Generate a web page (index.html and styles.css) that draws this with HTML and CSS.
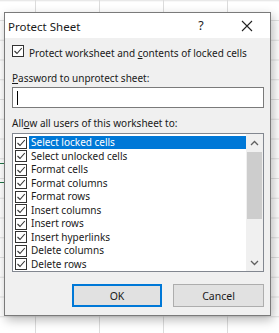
FILE: index.html
```html
<!DOCTYPE html>
<html lang="en">
<head>
  <meta charset="UTF-8">
  <title>Protect Sheet</title>
  <link rel="stylesheet" href="styles.css">
</head>
<body>

<div class="dialog">
  <div class="titlebar">
    <span class="title">Protect Sheet</span>
    <span class="tb-btn">?</span>
    <span class="tb-btn">
      <svg width="12" height="12" viewBox="0 0 12 12"><path d="M1 1 L11 11 M11 1 L1 11" stroke="#222" stroke-width="1.1" fill="none"/></svg>
    </span>
  </div>

  <div class="content">
    <div class="check-row">
      <span class="box"><svg width="10" height="10" viewBox="0 0 10 10"><path d="M1.5 5 L4 7.5 L8.8 2" stroke="#333" stroke-width="1.1" fill="none"/></svg></span>
      <span>Protect worksheet and <u>c</u>ontents of locked cells</span>
    </div>

    <div class="label"><u>P</u>assword to unprotect sheet:</div>
    <div class="input"><span class="caret"></span></div>

    <div class="label allow">All<u>o</u>w all users of this worksheet to:</div>

    <div class="listbox">
      <div class="items">
        <div class="item selected"><span class="box"><svg width="10" height="10" viewBox="0 0 10 10"><path d="M1.5 5 L4 7.5 L8.8 2" stroke="#333" stroke-width="1.1" fill="none"/></svg></span><span class="txt">Select locked cells</span></div>
        <div class="item"><span class="box"><svg width="10" height="10" viewBox="0 0 10 10"><path d="M1.5 5 L4 7.5 L8.8 2" stroke="#333" stroke-width="1.1" fill="none"/></svg></span><span class="txt">Select unlocked cells</span></div>
        <div class="item"><span class="box"><svg width="10" height="10" viewBox="0 0 10 10"><path d="M1.5 5 L4 7.5 L8.8 2" stroke="#333" stroke-width="1.1" fill="none"/></svg></span><span class="txt">Format cells</span></div>
        <div class="item"><span class="box"><svg width="10" height="10" viewBox="0 0 10 10"><path d="M1.5 5 L4 7.5 L8.8 2" stroke="#333" stroke-width="1.1" fill="none"/></svg></span><span class="txt">Format columns</span></div>
        <div class="item"><span class="box"><svg width="10" height="10" viewBox="0 0 10 10"><path d="M1.5 5 L4 7.5 L8.8 2" stroke="#333" stroke-width="1.1" fill="none"/></svg></span><span class="txt">Format rows</span></div>
        <div class="item"><span class="box"><svg width="10" height="10" viewBox="0 0 10 10"><path d="M1.5 5 L4 7.5 L8.8 2" stroke="#333" stroke-width="1.1" fill="none"/></svg></span><span class="txt">Insert columns</span></div>
        <div class="item"><span class="box"><svg width="10" height="10" viewBox="0 0 10 10"><path d="M1.5 5 L4 7.5 L8.8 2" stroke="#333" stroke-width="1.1" fill="none"/></svg></span><span class="txt">Insert rows</span></div>
        <div class="item"><span class="box"><svg width="10" height="10" viewBox="0 0 10 10"><path d="M1.5 5 L4 7.5 L8.8 2" stroke="#333" stroke-width="1.1" fill="none"/></svg></span><span class="txt">Insert hyperlinks</span></div>
        <div class="item"><span class="box"><svg width="10" height="10" viewBox="0 0 10 10"><path d="M1.5 5 L4 7.5 L8.8 2" stroke="#333" stroke-width="1.1" fill="none"/></svg></span><span class="txt">Delete columns</span></div>
        <div class="item"><span class="box"><svg width="10" height="10" viewBox="0 0 10 10"><path d="M1.5 5 L4 7.5 L8.8 2" stroke="#333" stroke-width="1.1" fill="none"/></svg></span><span class="txt">Delete rows</span></div>
      </div>
      <div class="scrollbar">
        <span class="arrow"><svg width="9" height="6" viewBox="0 0 9 6"><path d="M1 5 L4.5 1.5 L8 5" stroke="#606060" stroke-width="1.3" fill="none"/></svg></span>
        <div class="track"><div class="thumb"></div></div>
        <span class="arrow"><svg width="9" height="6" viewBox="0 0 9 6"><path d="M1 1 L4.5 4.5 L8 1" stroke="#606060" stroke-width="1.3" fill="none"/></svg></span>
      </div>
    </div>

    <div class="buttons">
      <button class="btn default">OK</button>
      <button class="btn">Cancel</button>
    </div>
  </div>
</div>

</body>
</html>
```

FILE: styles.css
```css
body {
  margin: 0;
  height: 333px;
  overflow: hidden;
  font-family: "Noto Sans", "Open Sans", sans-serif;
  color: #1a1a1a;
  background-color: #fff;
  background-image:
    linear-gradient(#217346, #217346),
    linear-gradient(#217346, #217346),
    linear-gradient(to right, #dcdcdc 1px, transparent 1px),
    linear-gradient(to bottom, #e2e2e2 1px, transparent 1px);
  background-size: 4px 1px, 4px 1px, 64px 100%, 100% 19.75px;
  background-position: 0 163px, 0 182px, 35px 0, 0 20px;
  background-repeat: no-repeat, no-repeat, repeat, repeat;
  padding: 12px 0 0 4px;
  box-sizing: border-box;
}

/* dialog window */
.dialog {
  width: 267px;
  height: 304px;
  box-sizing: border-box;
  border: 1px solid #7a7a7a;
  background: #f0f0f0;
  box-shadow: 2px 4px 10px rgba(0, 0, 0, 0.28);
  display: flex;
  flex-direction: column;
}

.titlebar {
  height: 25px;
  background: #fff;
  display: flex;
  align-items: center;
  padding-left: 3px;
}

.title {
  flex: 1;
  font-size: 11.5px;
  padding-top: 1px;
}

.tb-btn {
  width: 46px;
  height: 25px;
  display: flex;
  align-items: center;
  justify-content: center;
  font-size: 12.5px;
  color: #222;
}

.content {
  flex: 1;
  padding: 7px 6px 6px 7px;
  font-size: 10px;
  display: flex;
  flex-direction: column;
}

u {
  text-decoration-thickness: 1px;
  text-underline-offset: 1px;
}

.box {
  width: 12px;
  height: 12px;
  box-sizing: border-box;
  border: 1px solid #333;
  background: #fff;
  display: flex;
  align-items: center;
  justify-content: center;
  flex: none;
}

.check-row {
  height: 12px;
  display: flex;
  align-items: center;
  gap: 5px;
  line-height: 12px;
}

.check-row span:last-child {
  padding-top: 3px;
}

.label {
  margin-top: 14px;
  height: 14px;
  line-height: 14px;
}

.label.allow {
  margin-top: 8px;
}

.input {
  margin-top: 2px;
  height: 21px;
  box-sizing: border-box;
  border: 1px solid #7a7a7a;
  background: #fff;
  display: flex;
  align-items: center;
  padding-left: 4px;
}

.caret {
  width: 1px;
  height: 14px;
  background: #000;
}

/* list of permissions */
.listbox {
  margin-top: 3px;
  height: 139px;
  box-sizing: border-box;
  border: 1px solid #828790;
  background: #fff;
  display: flex;
  overflow: hidden;
}

.items {
  flex: 1;
  padding: 2px 0 0 2px;
  overflow: hidden;
}

.item {
  height: 13.5px;
  display: flex;
  align-items: center;
}

.item .txt {
  flex: 1;
  margin-left: 2px;
  padding-left: 2px;
  height: 13px;
  line-height: 13px;
  white-space: nowrap;
}

.item.selected .txt {
  background: #0078d7;
  color: #fff;
}

.scrollbar {
  width: 17px;
  background: #f0f0f0;
  display: flex;
  flex-direction: column;
}

.arrow {
  height: 17px;
  display: flex;
  align-items: center;
  justify-content: center;
}

.track {
  flex: 1;
}

.thumb {
  margin: 1px 1px 0 1px;
  height: 67px;
  background: #cdcdcd;
}

.buttons {
  margin-top: 12px;
  display: flex;
  justify-content: flex-end;
  gap: 11px;
}

.btn {
  width: 91px;
  height: 23px;
  box-sizing: border-box;
  border: 1px solid #adadad;
  background: #e1e1e1;
  font-family: "Noto Sans", "Open Sans", sans-serif;
  font-size: 10.5px;
  color: #1a1a1a;
  padding: 0;
}

.btn.default {
  width: 90px;
  border: 2px solid #0078d7;
}
```
